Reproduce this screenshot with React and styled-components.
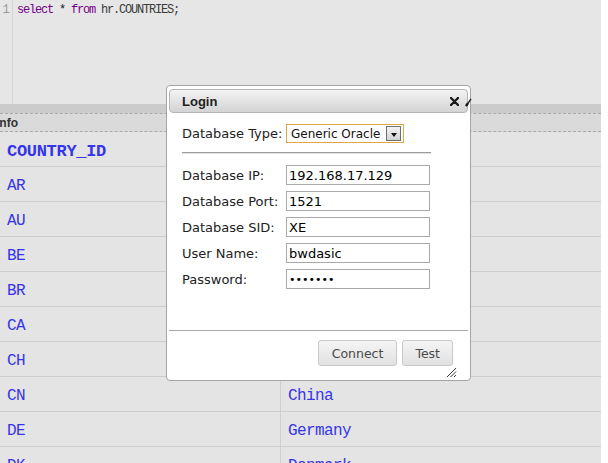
import React from "react";
import styled, { createGlobalStyle } from "styled-components";

const GlobalStyle = createGlobalStyle`
  html, body {
    margin: 0;
    padding: 0;
    background: #fff;
    overflow: hidden;
  }
  body {
    font-family: "DejaVu Sans", Verdana, sans-serif;
  }
`;

const Page = styled.div`
  position: relative;
  width: 601px;
  height: 463px;
  overflow: hidden;
  background: #e3e3e3;
`;

// sql editor on top
const Editor = styled.div`
  display: flex;
  height: 104px;
  background: #e6e6e6;
`;

const Gutter = styled.div`
  box-sizing: border-box;
  width: 13px;
  border-right: 1px solid #d6d6d6;
  padding-top: 3px;
  text-align: center;
  font: 12px/14px "Liberation Mono", monospace;
  color: #9a9a9a;
`;

const Code = styled.div`
  padding: 3px 0 0 4px;
  font: 12px/14px "Liberation Mono", monospace;
  letter-spacing: -1.2px;
  color: #3a3a3a;
  white-space: pre;
`;

const Keyword = styled.span`
  color: #770088;
`;

const Op = styled.span`
  color: #111;
`;

const Splitter = styled.div`
  height: 9px;
  background: #cbcbcb;
`;

const InfoBar = styled.div`
  height: 17px;
  border-top: 1px dashed #a9a9a9;
  border-bottom: 1px dashed #a9a9a9;
  background: #dadada;
  display: flex;
  align-items: center;
  overflow: hidden;
  font: bold 12px "Liberation Sans", Arial, sans-serif;
  color: #333;
  span {
    margin-left: -4px;
    padding-top: 1px;
  }
`;

const Table = styled.div`
  display: grid;
  grid-template-columns: 281px 1fr;
`;

const Cell = styled.div`
  box-sizing: border-box;
  height: 35px;
  padding: 4px 0 0 7px;
  display: flex;
  align-items: center;
  border-bottom: 1px solid #cecece;
  border-right: ${(p) => (p.$first ? "1px solid #cecece" : "none")};
  background: #e4e4e4;
  color: #3535ea;
  font-family: "Liberation Mono", monospace;
  font-size: ${(p) => (p.$head ? 17 : 16)}px;
  font-weight: ${(p) => (p.$head ? "bold" : "normal")};
  letter-spacing: ${(p) => (p.$head ? -0.3 : -0.6)}px;
  white-space: nowrap;
`;

// login dialog lies over the page
const Dialog = styled.div`
  position: absolute;
  left: 166px;
  top: 85px;
  box-sizing: border-box;
  width: 305px;
  height: 296px;
  padding: 3px 2px 0 2px;
  border: 1px solid #a4a4a4;
  border-radius: 4px;
  background: #fff;
  display: flex;
  flex-direction: column;
`;

const TitleBar = styled.div`
  box-sizing: border-box;
  height: 24px;
  border: 1px solid #b5b5b5;
  border-radius: 4px;
  background: linear-gradient(#f3f3f3, #d3d3d3);
  display: flex;
  align-items: center;
  justify-content: space-between;
  padding: 0 8px 0 12px;
  font: bold 13px "Liberation Sans", Arial, sans-serif;
  color: #222;
`;

const Pin = styled.svg`
  position: absolute;
  left: 298px;
  top: 11px;
`;

const Body = styled.div`
  box-sizing: border-box;
  height: 217px;
  padding: 11px 0 0 13px;
  font-size: 13px;
  color: #222;
`;

const FormGrid = styled.div`
  display: grid;
  grid-template-columns: 104px 144px;
  row-gap: 6px;
  align-items: center;
  margin-top: ${(p) => p.$top || 0}px;
`;

const Label = styled.label`
  font-size: 13px;
  color: #222;
  white-space: nowrap;
`;

const SelectBox = styled.div`
  box-sizing: border-box;
  width: 118px;
  height: 19px;
  border: 1px solid #e2a646;
  display: flex;
  align-items: center;
  justify-content: space-between;
  padding: 0 2px 0 4px;
  font-size: 12px;
  color: #111;
  white-space: nowrap;
`;

const DropButton = styled.div`
  box-sizing: border-box;
  width: 15px;
  height: 15px;
  border: 1px solid #707070;
  background: linear-gradient(#f4f4f4, #d2d2d2);
  display: flex;
  align-items: center;
  justify-content: center;
  padding-top: 2px;
  &::after {
    content: "";
    border-left: 3.5px solid transparent;
    border-right: 3.5px solid transparent;
    border-top: 4px solid #111;
  }
`;

const Divider = styled.div`
  width: 249px;
  margin-top: 9px;
  border-top: 1px solid #9c9c9c;
  border-bottom: 1px solid #e2e2e2;
`;

const Input = styled.input`
  box-sizing: border-box;
  width: 144px;
  height: 20px;
  margin: 0;
  padding: 0 0 0 2px;
  border: 1px solid #a9a9a9;
  border-radius: 0;
  outline: none;
  font-family: "DejaVu Sans", Verdana, sans-serif;
  font-size: ${(p) => (p.type === "password" ? 11 : 13)}px;
  color: #000;
  background: #fff;
`;

const Footer = styled.div`
  position: relative;
  flex: 1;
  border-top: 1px solid #a8a8a8;
  display: flex;
  justify-content: flex-end;
  align-items: flex-start;
  gap: 5px;
  padding: 9px 15px 0 0;
`;

const Button = styled.button`
  box-sizing: border-box;
  height: 26px;
  padding: 0 ${(p) => p.$pad}px;
  border: 1px solid #c9c9c9;
  border-radius: 3px;
  background: linear-gradient(#f5f5f5, #e1e1e1);
  font-family: "DejaVu Sans", Verdana, sans-serif;
  font-size: 12.5px;
  color: #4a4a4a;
`;

const Grip = styled.svg`
  position: absolute;
  right: 11px;
  bottom: 2px;
`;

const rows = [
  ["AR", "Argentina"],
  ["AU", "Australia"],
  ["BE", "Belgium"],
  ["BR", "Brazil"],
  ["CA", "Canada"],
  ["CH", "Switzerland"],
  ["CN", "China"],
  ["DE", "Germany"],
  ["DK", "Denmark"],
];

const fields = [
  ["Database IP:", "192.168.17.129", "text"],
  ["Database Port:", "1521", "text"],
  ["Database SID:", "XE", "text"],
  ["User Name:", "bwdasic", "text"],
  ["Password:", "1234567", "password"],
];

export default function App() {
  return (
    <>
      <GlobalStyle />
      <Page>
        <Editor>
          <Gutter>1</Gutter>
          <Code>
            <Keyword>select</Keyword> <Op>*</Op> <Keyword>from</Keyword>{" "}
            hr.COUNTRIES;
          </Code>
        </Editor>
        <Splitter />
        <InfoBar>
          <span>Info</span>
        </InfoBar>
        <Table>
          <Cell $first $head>
            COUNTRY_ID
          </Cell>
          <Cell $head>COUNTRY_NAME</Cell>
          {rows.map(([id, name]) => (
            <React.Fragment key={id}>
              <Cell $first>{id}</Cell>
              <Cell>{name}</Cell>
            </React.Fragment>
          ))}
        </Table>

        <Dialog>
          <TitleBar>
            <span>Login</span>
            <svg width="9" height="9" viewBox="0 0 9 9">
              <path
                d="M1 1 L8 8 M8 1 L1 8"
                stroke="#1a1a1a"
                strokeWidth="2.4"
                strokeLinecap="round"
              />
            </svg>
          </TitleBar>
          <Pin width="7" height="10" viewBox="0 0 7 10">
            <path d="M1 9 L6 2" stroke="#222" strokeWidth="1.3" />
            <path d="M1 9 L3 6.2" stroke="#111" strokeWidth="2.2" />
          </Pin>
          <Body>
            <FormGrid>
              <Label>Database Type:</Label>
              <SelectBox>
                <span>Generic Oracle</span>
                <DropButton />
              </SelectBox>
            </FormGrid>
            <Divider />
            <FormGrid $top={11}>
              {fields.map(([label, value, type]) => (
                <React.Fragment key={label}>
                  <Label>{label}</Label>
                  <Input type={type} defaultValue={value} readOnly />
                </React.Fragment>
              ))}
            </FormGrid>
          </Body>
          <Footer>
            <Button $pad={13}>Connect</Button>
            <Button $pad={12}>Test</Button>
            <Grip width="11" height="11" viewBox="0 0 11 11">
              <path
                d="M1 10 L10 1 M4.5 10 L10 4.5 M8 10 L10 8"
                stroke="#333"
                strokeWidth="1"
              />
            </Grip>
          </Footer>
        </Dialog>
      </Page>
    </>
  );
}
